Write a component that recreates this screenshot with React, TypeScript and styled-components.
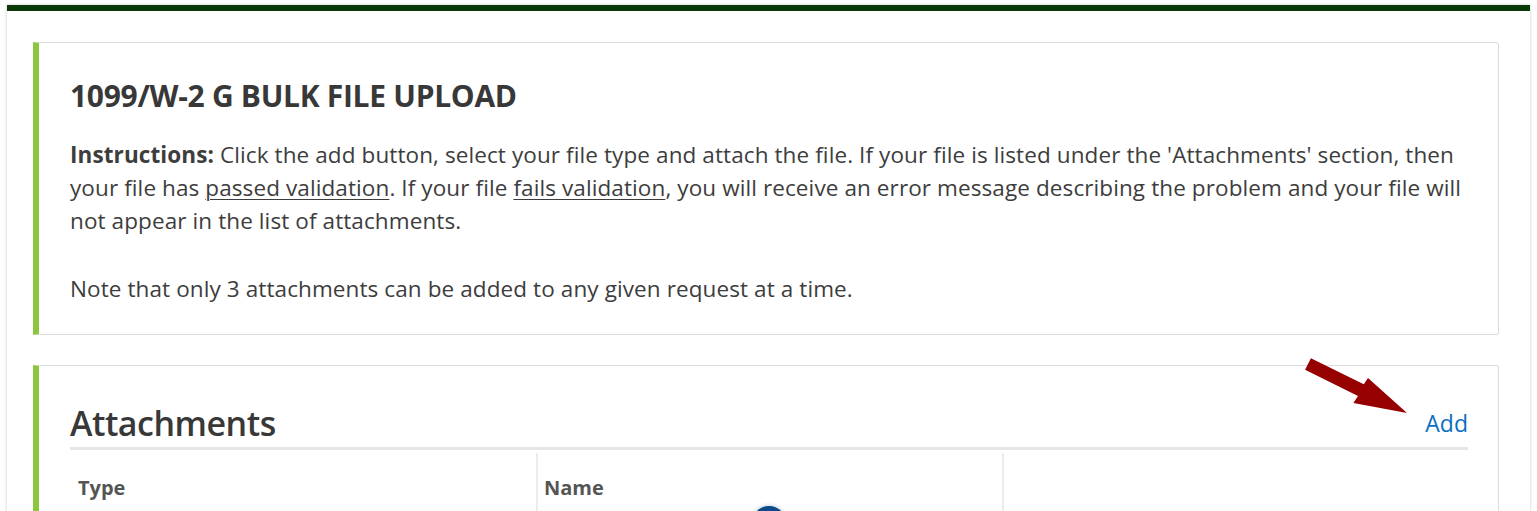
import React from "react";
import styled, { createGlobalStyle } from "styled-components";

const Global = createGlobalStyle`
  html, body { margin: 0; padding: 0; background: #ffffff; }
  body { font-family: "Open Sans", "Noto Sans", Arial, sans-serif; color: #3d3d3d; }
  #root { position: relative; }
`;

const Shell = styled.div`
  margin: 5px 7px 0 7px;
  border-top: 6px solid #0a380b;
  background: #fff;
  box-shadow: 0 0 3px rgba(0, 0, 0, 0.22);
  padding: 31px 31px 40px 26px;
  min-height: 480px;
  box-sizing: border-box;
`;

const Panel = styled.section`
  border: 1px solid #dcdcdc;
  border-left: 6px solid #8cc63f;
  border-radius: 0 3px 3px 0;
  background: #fff;
  margin-bottom: 30px;
  position: relative;
`;

const InfoBody = styled.div`
  padding: 35px 31px 29px 31px;
`;

const Title = styled.h2`
  margin: 0 0 24px 0;
  font-size: 30px;
  font-weight: 700;
  line-height: 36px;
  color: #383838;
  letter-spacing: -0.3px;
`;

const Text = styled.p`
  margin: 0;
  font-size: 22.5px;
  line-height: 33px;
  color: #3d3d3d;
  letter-spacing: 0.1px;
`;

const Line = styled.span`
  display: block;
  white-space: nowrap;
`;

const Gap = styled.span`
  display: block;
  height: 35px;
`;

const Under = styled.span`
  text-decoration: underline;
  text-underline-offset: 3px;
  text-decoration-thickness: 1px;
`;

const AttachBody = styled.div`
  padding: 35px 30px 0 31px;
`;

const HeaderRow = styled.div`
  display: flex;
  justify-content: space-between;
  align-items: center;
  border-bottom: 3px solid #e6e6e6;
  padding-bottom: 2px;
`;

const Heading = styled.h3`
  margin: 0;
  font-size: 34px;
  font-weight: 600;
  line-height: 44px;
  color: #383838;
  letter-spacing: -0.5px;
`;

const AddLink = styled.a`
  font-size: 23px;
  line-height: 28px;
  color: #0a6fc2;
  text-decoration: none;
  cursor: pointer;
`;

const Table = styled.div`
  display: grid;
  grid-template-columns: repeat(3, 1fr);
  margin-top: 3px;
`;

const HeadCell = styled.div<{ $divider?: boolean }>`
  padding: 21px 6px 22px 6px;
  font-size: 20px;
  font-weight: 700;
  color: #555555;
  line-height: 28px;
  border-left: 2px solid ${(p) => (p.$divider ? "#ebebeb" : "transparent")};
  min-height: 60px;
`;

const Arrow = styled.svg`
  position: absolute;
  left: 1261px;
  top: -14px;
  width: 115px;
  height: 65px;
  overflow: visible;
`;

const Spinner = styled.div`
  position: absolute;
  left: 752px;
  top: 501px;
  width: 34px;
  height: 34px;
  border-radius: 50%;
  background: #0b4a86;
  box-shadow: 0 0 4px rgba(11, 74, 134, 0.35);
`;

export default function App() {
  const pts = [
    [1310.9, 358.2],
    [1363.8, 384.3],
    [1368, 378.1],
    [1407, 413],
    [1353.4, 403.1],
    [1358.0, 395.9],
    [1305.1, 369.8],
  ]
    .map(([x, y]) => `${(x - 1300).toFixed(1)},${(y - 352).toFixed(1)}`)
    .join(" ");

  return (
    <>
      <Global />
      <Shell>
        <Panel>
          <InfoBody>
            <Title>1099/W-2 G BULK FILE UPLOAD</Title>
            <Text>
              <Line>
                <strong>Instructions:</strong> Click the add button, select your file type and attach the file. If
                your file is listed under the 'Attachments' section, then
              </Line>
              <Line>
                your file has <Under>passed validation</Under>. If your file <Under>fails validation</Under>, you will
                receive an error message describing the problem and your file will
              </Line>
              <Line>not appear in the list of attachments.</Line>
              <Gap />
              <Line>Note that only 3 attachments can be added to any given request at a time.</Line>
            </Text>
          </InfoBody>
        </Panel>
        <Panel>
          <Arrow viewBox="0 0 115 65">
            <polygon points={pts} fill="#960000" />
          </Arrow>
          <AttachBody>
            <HeaderRow>
              <Heading>Attachments</Heading>
              <AddLink>Add</AddLink>
            </HeaderRow>
            <Table>
              <HeadCell>Type</HeadCell>
              <HeadCell $divider>Name</HeadCell>
              <HeadCell $divider />
            </Table>
          </AttachBody>
        </Panel>
      </Shell>
      <Spinner />
    </>
  );
}
